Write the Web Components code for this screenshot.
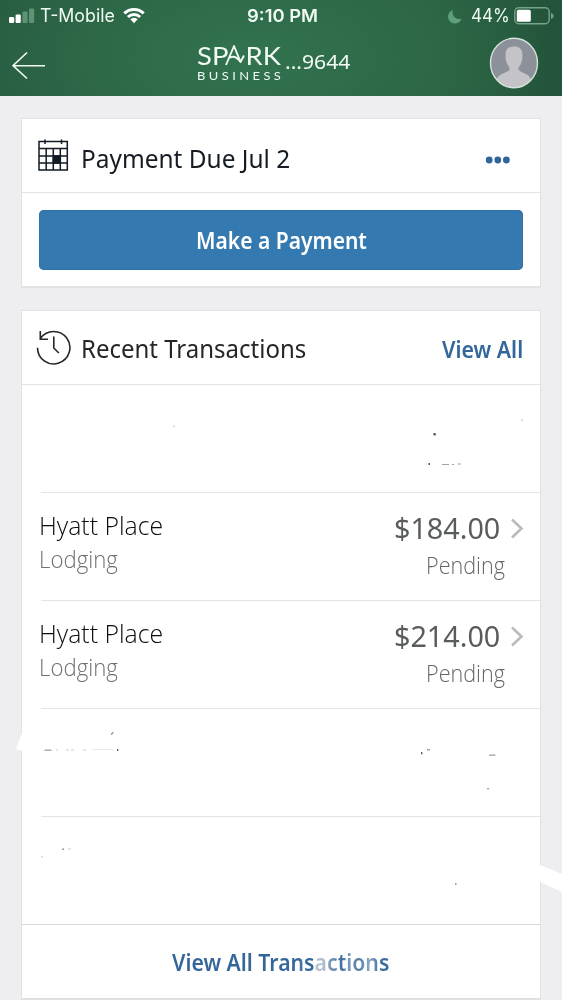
<!DOCTYPE html>
<html lang="en">
<head>
<meta charset="utf-8">
<title>Spark Business</title>
<style>
html,body{margin:0;padding:0;background:#eeeef0}
body{width:562px;height:1000px;overflow:hidden;font-family:"Noto Sans","Open Sans",sans-serif}
</style>
</head>
<body>
<account-screen></account-screen>
<script>
const define = (name, html, setup) => customElements.define(name, class extends HTMLElement {
  constructor() {
    super();
    this.attachShadow({ mode: 'open' }).innerHTML = html;
  }
  connectedCallback() { if (setup) setup(this, this.shadowRoot); }
});

/* One line of text condensed or widened to the advance width in its "w" attribute. */
define('fit-text', `
<style>
:host{display:block;white-space:nowrap;flex:none}
span{display:inline-block;transform-origin:0 50%}
</style><span><slot></slot></span>`, (el, root) => {
  const w = +el.getAttribute('w'), s = root.querySelector('span');
  el.style.width = w + 'px';
  s.style.transform = 'scaleX(' + w / s.offsetWidth + ')';
});

define('status-bar', `
<style>
:host{display:grid;grid-template-columns:1fr auto 1fr;align-items:center;height:32px;padding:0 8px 0 9px;color:#eefaf2;font:400 18px/32px Inter,sans-serif}
.l,.r{display:flex;align-items:center}
.r{justify-content:flex-end}
svg{display:block;flex:none}
.t{font-weight:600;font-size:17.500px;padding-left:2px}
</style>
<div class="l">
<svg width="26" height="16" viewBox="0 0 26 16"><g fill="#fff"><rect y="9" width="5.2" height="6" rx="1.2"/><rect x="6.6" y="6.5" width="5.2" height="8.500" rx="1.2"/></g><g fill="#5e9375"><rect x="13.400" y="3.500" width="5.200" height="11.500" rx="1.200"/><rect x="20" y="0.500" width="5.200" height="14.500" rx="1.200"/></g></svg>
<fit-text w="75" style="margin-left:4.500px">T-Mobile</fit-text>
<svg width="22" height="17" viewBox="0 0 22 17" style="margin-left:8.500px;margin-top:-2px"><g fill="none" stroke="#fff" stroke-width="3"><path d="M1.300 6.300a14 14 0 0 1 19.400 0"/><path d="M4.900 10a9 9 0 0 1 12.200 0"/></g><path d="M7.300 12.300a5.300 5.300 0 0 1 7.400 0L11 16.200z" fill="#fff"/></svg>
</div>
<fit-text class="t" w="71.500">9:10 PM</fit-text>
<div class="r">
<svg width="14" height="15" viewBox="0 0 14 15"><path d="M5 1C3 6 7.500 11 13.500 9.800A6.900 6.900 0 1 1 5 1z" fill="#609f7b"/></svg>
<fit-text w="39" style="margin-left:9px">44%</fit-text>
<svg width="40" height="18" viewBox="0 0 40 18" style="margin-left:4px"><rect x=".8" y=".8" width="34.400" height="16" rx="4" fill="none" stroke="#75a489" stroke-width="1.400"/><rect x="2.800" y="2.800" width="14" height="12" rx="1.600" fill="#fff"/><path d="M37 6c3.400.8 3.400 5 0 5.800z" fill="#75a489"/></svg>
</div>`);

define('spark-logo', `
<style>
:host{display:block;position:relative;width:86px;height:40px;color:#f0fbf4;font-family:Lato,sans-serif}
.s{font-size:24.500px;line-height:26px;height:26.500px}
.b{font-size:11.200px;line-height:12px;letter-spacing:3px}
.a{color:transparent}
svg{position:absolute;left:0;top:-1px}
</style>
<fit-text class="s" w="84">SP<span class="a">A</span>RK</fit-text>
<fit-text class="b" w="87.500">BUSINESS</fit-text>
<svg width="86" height="30" viewBox="0 0 86 30" fill="none" stroke="#f0fbf4" stroke-width="1.900" stroke-linejoin="round"><path d="M29 23 37 4 43.500 20 47 13.500M32 16q6-4 11.500 4"/></svg>`);

define('app-header', `
<style>
:host{display:block;height:96px;background:radial-gradient(ellipse 300px 150px at 45% 60%,#33734f 0,#2e6a48 45%,transparent 100%),linear-gradient(90deg,#275a40,#2d6545 40%,#2b6142 75%,#23533a)}
.bar{display:grid;grid-template-columns:185px 1fr 73px;height:64px;align-items:start}
.mid{display:flex;padding:11px 0 0 12px;color:#f0fbf4}
.n{font-size:20.500px;line-height:28px;margin-top:4px;margin-left:2px}
svg{display:block}
</style>
<status-bar></status-bar>
<div class="bar">
<svg width="34" height="30" viewBox="0 0 34 30" style="margin:19px 0 0 12px" fill="none" stroke="#f0fbf4" stroke-width="1.600"><path d="M33 14.700H1M15 1.500 1 14.700 15 27.500"/></svg>
<div class="mid"><spark-logo></spark-logo><fit-text class="n" w="65">...9644</fit-text></div>
<svg width="50" height="52" viewBox="0 0 50 52" style="margin-top:5px"><defs><clipPath id="c"><ellipse cx="25" cy="26" rx="23.500" ry="24.700"/></clipPath></defs><ellipse cx="25" cy="26" rx="23.500" ry="24.700" fill="#8c9099"/><g clip-path="url(#c)" fill="#c3c3c8"><path d="M16.500 18c0-6 3-8.500 8.500-8.500s8.500 2.500 8.500 8.500c0 6-1.500 10-4 12.500v2c2 4 12 3 13.500 13V54H7v-8.500c1-10 12-9 13.500-13v-2C18 28 16.500 24 16.500 18z"/></g><ellipse cx="25" cy="26" rx="23.500" ry="24.700" fill="none" stroke="#d5e3da" stroke-width="1.400"/></svg>
</div>`);

define('ui-card', `
<style>
:host{display:block;box-sizing:border-box;background:#fff;border:1px solid #e2e2e6;box-shadow:0 1px 0 #e4e4e7}
header{display:flex;align-items:center;height:73px;border-bottom:1px solid #e3e4e7;padding:0 17px 0 14px}
.g{flex:1}
</style>
<header><slot name="icon"></slot><slot name="title"></slot><div class="g"></div><slot name="action"></slot></header>
<slot></slot>`);

define('primary-button', `
<style>
:host{display:flex;justify-content:center;align-items:center;height:60px;border-radius:5px;background:#3579b1;box-shadow:inset 0 0 0 1px #3273a8;color:#fff;font-weight:600;font-size:22.500px;line-height:30px}
</style><slot></slot>`);

define('transaction-row', `
<style>
:host{display:flex;box-sizing:border-box;height:108px;margin-left:19px;border-bottom:1px solid #e4e4e6;justify-content:space-between;font-family:"Open Sans","Noto Sans",sans-serif;font-weight:300}
:host([last]){border-bottom:0;height:107px}
.l{margin:14px 0 0 -2.500px}
.m{font-size:25.500px;line-height:36px;color:#0c0c0c}
.c{font-size:23.500px;line-height:32px;color:#6d7171}
.r{display:grid;grid-template-columns:auto 40px;margin-top:17px;justify-items:end;align-content:start}
.a{font:400 29px/36px "Noto Sans",sans-serif;color:#595c5e}
.p{grid-column:1/3;margin-right:35px;margin-top:3px;color:#626667}
svg{margin:7px 16px 0 0}
</style>
<div class="l"></div><div class="r"></div>`, (el, root) => {
  const g = n => el.getAttribute(n);
  if (!g('merchant')) return;
  root.querySelector('.l').innerHTML = `<fit-text class="m" w="124.500">${g('merchant')}</fit-text><fit-text class="c" w="78.500">${g('kind')}</fit-text>`;
  root.querySelector('.r').innerHTML = `<fit-text class="a" w="106">${g('amount')}</fit-text><svg width="14" height="22" viewBox="0 0 14 22" fill="none" stroke="#b9bbbd" stroke-width="2.600"><path d="M2 2.500 11.500 11.500 2 20.500"/></svg><fit-text class="c p" w="79">${g('state')}</fit-text>`;
});

/* Leftover marks and white strokes of the marker that hides private rows. */
define('redaction-marks', `
<style>:host{position:absolute;left:0;top:0;pointer-events:none}svg{display:block}</style>
<svg width="562" height="1000" viewBox="0 0 562 1000">
<path d="M22 733 16 749Q20 751 24 751V733zM540 865 562 874V892L540 882z" fill="#fff"/>
<g fill="#555"><rect x="433.500" y="433" width="2.200" height="2.500"/><rect x="428.500" y="463" width="1.500" height="2"/><rect x="421" y="752" width="1.300" height="2.300"/><rect x="117" y="749" width="1.300" height="2"/></g>
<g fill="#a0a0a0"><rect x="62" y="848.500" width="2" height="1.500"/><rect x="442" y="464" width="7" height="1"/><rect x="452" y="464" width="2" height="1"/><rect x="458" y="463.500" width="3" height="1"/><rect x="44.500" y="749.500" width="7" height="1.300"/><rect x="427" y="749" width="3" height="1.500"/><rect x="489" y="754.500" width="6.500" height="1.300"/><path d="m110.500 735 1.500-3h2l-2 3z"/><rect x="487" y="788" width="2.200" height="1.300"/><rect x="455" y="883" width="1.500" height="2"/></g>
<g fill="#cdcdcf"><rect x="68" y="848.500" width="3" height="1"/><rect x="173.500" y="425.500" width="1.300" height="2"/><rect x="521.500" y="419" width="1.200" height="2.500"/><rect x="56" y="749.500" width="2" height="1"/><rect x="66" y="749.500" width="3" height="1"/><rect x="71" y="749.500" width="3" height="1"/><rect x="83" y="749.500" width="3" height="1"/><rect x="92" y="749.500" width="22" height=".4"/><rect x="41" y="856" width="1.500" height="1.500"/></g>
</svg>`);

define('account-screen', `
<style>
:host{display:flex;flex-direction:column;position:relative;width:562px;height:1000px;overflow:hidden;background:#eeeef0}
main{display:flex;flex-direction:column;gap:23px;padding:22px 21px 0}
.pay{height:169px}.tx{height:690px}
svg{display:block;flex:none}
.h{font-size:25px;line-height:40px;margin-left:11px;color:#151c24}
.tx .h{color:#262626}
.link{font-size:22.500px;line-height:36px;font-weight:600;color:#33669a;margin-top:4px}
.foot .link{margin-top:3px}
primary-button{margin:17px 17px 0 17px}
primary-button fit-text{padding-top:2px}
.foot{display:flex;justify-content:center;align-items:center;height:75px;border-top:1px solid #d7d7d9;border-bottom:1px solid #dedee0;box-sizing:border-box;padding-right:1px}
.fade{background:linear-gradient(90deg,#33669a 58%,#4b79a5 60%,#33669a 62%,#33669a 65%,#b9c3d3 66%,#aab8ca 71%,#7695b6 73%,#5c84ad 76%,#3f70a1 78%,#7e9aba 82%,#4b79a5 86%,#91a7c1 91%,#3b6c9e 96%);-webkit-background-clip:text;color:transparent}
</style>
<app-header></app-header>
<main>
<ui-card class="pay">
<svg slot="icon" width="34" height="34" viewBox="0 0 34 34" style="margin-top:-3px" fill="none" stroke="#121a24" stroke-width="1.500"><path d="M3 4.500H31.300V33H3zM3 11.500H31.300M3 19H31.300M3 26H31.300M10.200 11.500V33M17.300 11.500V33M24.300 11.500V33M9 2.500v4.500M25.500 2.500v4.500"/><path d="M17.300 19h7v7h-7z" fill="#121a24"/></svg>
<fit-text slot="title" class="h" w="209" style="padding-top:4px">Payment Due Jul 2</fit-text>
<svg slot="action" width="26" height="10" viewBox="0 0 26 10" style="margin:9px 12px 0 0" fill="#2f6699"><circle cx="4.200" cy="5" r="3.400"/><circle cx="12.800" cy="5" r="3.400"/><circle cx="21.400" cy="5" r="3.400"/></svg>
<primary-button><fit-text w="171">Make a Payment</fit-text></primary-button>
</ui-card>
<ui-card class="tx">
<svg slot="icon" width="36" height="36" viewBox="0 0 36 36" style="margin-top:-2px" fill="none" stroke="#262626" stroke-width="1.600"><path d="M1.500 18.700A16.200 16.200 0 1 0 4.500 9.300M4.300 2v8.300H12M17.800 7.500V19l5 5"/></svg>
<fit-text slot="title" class="h" w="225.500" style="margin-left:9px">Recent Transactions</fit-text>
<fit-text slot="action" class="link" w="81.500">View All</fit-text>
<transaction-row></transaction-row>
<transaction-row merchant="Hyatt Place" kind="Lodging" amount="$184.00" state="Pending"></transaction-row>
<transaction-row merchant="Hyatt Place" kind="Lodging" amount="$214.00" state="Pending"></transaction-row>
<transaction-row></transaction-row>
<transaction-row last></transaction-row>
<div class="foot"><fit-text class="link" w="217"><span class="fade">View All Transactions</span></fit-text></div>
</ui-card>
</main>
<redaction-marks></redaction-marks>`);
</script>
</body>
</html>
